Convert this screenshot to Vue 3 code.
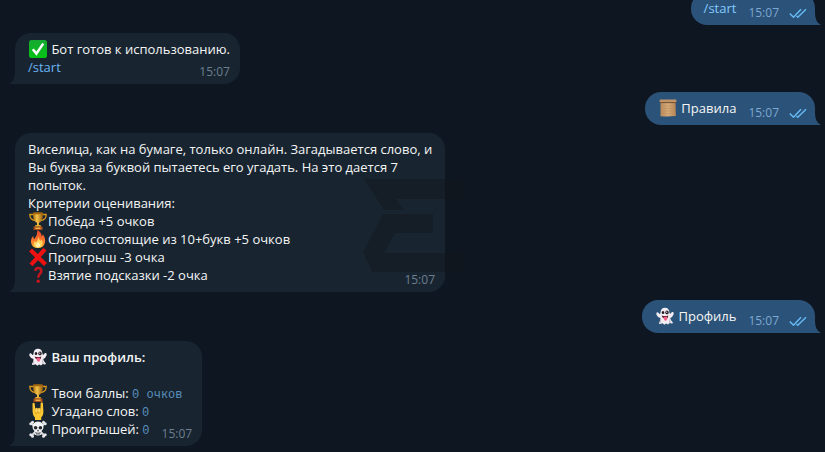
<script setup>
// Chat history, oldest message first
const messages = [
  { id: 1, out: true, time: '15:07', lines: [{ link: '/start' }] },
  {
    id: 2,
    time: '15:07',
    lines: [{ icon: 'check', text: ' Бот готов к использованию.' }, { link: '/start' }],
  },
  { id: 3, out: true, time: '15:07', lines: [{ icon: 'scroll', text: ' Правила' }] },
  {
    id: 4,
    time: '15:07',
    lines: [
      {
        text: 'Виселица, как на бумаге, только онлайн. Загадывается слово, и Вы буква за буквой пытаетесь его угадать. На это дается 7 попыток.',
      },
      { text: 'Критерии оценивания:' },
      { icon: 'trophy', text: 'Победа +5 очков' },
      { icon: 'fire', text: 'Слово состоящие из 10+букв +5 очков' },
      { icon: 'cross', text: 'Проигрыш -3 очка' },
      { icon: 'question', text: 'Взятие подсказки -2 очка' },
    ],
  },
  { id: 5, out: true, time: '15:07', lines: [{ icon: 'ghost', text: ' Профиль' }] },
  {
    id: 6,
    time: '15:07',
    lines: [
      { icon: 'ghost', bold: ' Ваш профиль:' },
      { text: '\u00a0' },
      { icon: 'trophy', text: ' Твои баллы: ', code: '0 очков' },
      { icon: 'horns', text: ' Угадано слов: ', code: '0' },
      { icon: 'skull', text: ' Проигрышей: ', code: '0' },
    ],
  },
]
</script>

<template>
  <svg class="sprite" aria-hidden="true">
    <defs>
      <linearGradient id="gold" x1="0" x2="1" y1="0" y2="0">
        <stop offset="0" stop-color="#a8690c" />
        <stop offset="0.4" stop-color="#f6c64a" />
        <stop offset="1" stop-color="#945808" />
      </linearGradient>
      <linearGradient id="green" x1="0" x2="0" y1="0" y2="1">
        <stop offset="0" stop-color="#16a832" />
        <stop offset="1" stop-color="#04c414" />
      </linearGradient>
      <linearGradient id="flame" x1="0" x2="0" y1="0" y2="1">
        <stop offset="0" stop-color="#e8442a" />
        <stop offset="0.6" stop-color="#fb7a2c" />
        <stop offset="1" stop-color="#ffb62e" />
      </linearGradient>
      <linearGradient id="paper" x1="0" x2="1" y1="0" y2="0">
        <stop offset="0" stop-color="#b98a5c" />
        <stop offset="0.5" stop-color="#d6ab7a" />
        <stop offset="1" stop-color="#b58354" />
      </linearGradient>
    </defs>
    <symbol id="check" viewBox="0 0 18 18">
      <rect width="18" height="18" rx="2.5" fill="url(#green)" />
      <path d="M3.8 9.2 7.4 13.6 14.2 3.6" fill="none" stroke="#fff" stroke-width="2.5" />
    </symbol>
    <symbol id="scroll" viewBox="0 0 18 18">
      <path d="M1.5 2h15l.4 15q-8 .8-15.400.2z" fill="url(#paper)" />
      <rect x="0.600" y="0.600" width="16.800" height="3" rx="1" fill="#c0946a" />
      <path d="M1 3.600h16" stroke="#74502e" stroke-width="1" />
      <path d="M4 7h10M4 9.500h10M4 12h10M4 14.500h9" stroke="#bd9060" stroke-width="0.600" />
    </symbol>
    <symbol id="trophy" viewBox="0 0 18 18">
      <path d="M4.500 2.500H.8q0 5.500 5.400 6M13.500 2.500h3.700q0 5.500-5.400 6" fill="none" stroke="#d9971c" stroke-width="1.300" />
      <path d="M4 .8h10q.2 8.400-4 10v3.200H8v-3.200Q3.800 9.200 4 .8z" fill="url(#gold)" />
      <ellipse cx="9" cy="1.300" rx="5" ry="1" fill="#a3660c" />
      <path d="M6.500 13h5l.7 1.800H5.800z" fill="#e7ab2c" />
      <path d="M4.500 14.500h9V18h-9z" fill="#a94d16" />
      <path d="M6.500 15.600h5v1.300h-5z" fill="#f0ba55" />
    </symbol>
    <symbol id="fire" viewBox="0 0 18 18">
      <path d="M8.500 0q4.500 2.600 4 6.500 1.400-.7 1.300-2.500Q17 8.500 16 12.500 14.600 18 9 18q-6 0-7-5.500Q1.500 8.500 4.300 6q-.2 2.600 1.200 3Q8.600 5 8.500 0z" fill="url(#flame)" />
      <path d="M9.500 7q.3 2.600 2 4 1.100-.4 1.200-1.700 1.600 3.200.5 5.700-1.300 2.700-4.200 2.700-3.600 0-4.200-3.200-.2-2 .9-3.500.5 1.500 1.500 1.300Q9 10.500 9.500 7z" fill="#ffd75c" />
      <path d="M9.300 12q3 3.200 1 5-1.400.9-2.700 0-1.700-1.800 1.700-5z" fill="#fff1b4" />
    </symbol>
    <symbol id="cross" viewBox="0 0 18 18">
      <path d="M1.500 2 16.500 16.500M16 1.200 2 16.800" stroke="#ee1111" stroke-width="4.200" />
    </symbol>
    <symbol id="question" viewBox="0 0 18 18">
      <path d="M6.300 4.800Q6.500 2 9.300 2q3 0 3 2.900 0 1.600-1.500 3.100T9.300 11.800" fill="none" stroke="#c4141c" stroke-width="2.500" />
      <circle cx="9.200" cy="15.200" r="1.600" fill="#d4141c" />
    </symbol>
    <symbol id="ghost" viewBox="0 0 18 18">
      <path d="M9 .8q4.200 0 4.500 5.200.5 1.300 1.500.3.700-1.700 1.900-1.200 1.300.8.500 2.600-1 2.600-3.100 3.200.1 2.500 2.400 4.400.7 1-.8 1.100l-2.300-.3-1.500 1.500-2-1.200-1.800 1.300-1.700-1.500-2.600.7q-1.600-.1-.8-1.300 1.700-2 1.200-4.600Q1.600 10.500.6 8-.2 5.800 1.300 5.200q1.200-.2 1.900 1.500 1 .7 1.200-.7Q4.800.8 9 .8z" fill="#f1edf2" />
      <path d="M13.300 10q.1 4 2 5.700l-2.400-.2zM4.600 10q.2 3.800-1.400 5.900l2-.7z" fill="#c3bfc9" />
      <ellipse cx="7" cy="5.400" rx="1.300" ry="1.500" fill="#241c22" />
      <ellipse cx="11" cy="5.400" rx="1.700" ry="1.900" fill="#241c22" />
      <circle cx="10.800" cy="5.200" r="0.600" fill="#fff" />
      <path d="M5.700 8.500q3.300 1.200 6.600 0-.3 3-2 3.300Q6.400 12 5.700 8.500z" fill="#5c1824" />
      <path d="M7.500 9.700h3.600v2.800q-1.500 2.300-3 .2z" fill="#f0608a" />
    </symbol>
    <symbol id="horns" viewBox="0 0 18 18">
      <path d="M3.500 1.200q1.300-1.100 2.200.2l.5 5.400h5.200l.3-5.800q1.100-1.500 2.200 0l.5 9q.1 4-2.200 5.500V18H6v-2.300Q3.500 13.500 3.600 9.500z" fill="#fcc832" />
      <path d="M6.300 6.700q1.200-1.300 2.500 0 1.300-1.300 2.600 0v3.600q-1.300 1.200-2.600 0-1.300 1-2.500 0z" fill="#ffdc62" stroke="#d89a20" stroke-width="0.500" />
      <path d="M8.800 6.800v3.500M5.600 12q2.700-2.300 5.600-.8" fill="none" stroke="#d08e18" stroke-width="0.600" />
    </symbol>
    <symbol id="skull" viewBox="0 0 18 18">
      <path d="M2.500 3.500 15.500 15.500M15.500 3.500 2.500 15.500" stroke="#d8d8dc" stroke-width="2" />
      <g fill="#e6e6ea">
        <circle cx="1.800" cy="3.800" r="1.500" /><circle cx="3.500" cy="2.200" r="1.500" />
        <circle cx="16.200" cy="3.800" r="1.500" /><circle cx="14.500" cy="2.200" r="1.500" />
        <circle cx="1.800" cy="14.700" r="1.500" /><circle cx="3.500" cy="16.200" r="1.500" />
        <circle cx="16.200" cy="14.700" r="1.500" /><circle cx="14.500" cy="16.200" r="1.500" />
      </g>
      <path d="M9 1.500q5.300.1 5.500 5.500 0 2.800-2 4v3.500q-3.500 2.200-7 0V11q-2-1.200-2-4Q3.700 1.600 9 1.500z" fill="#f3f3f5" />
      <circle cx="6.600" cy="7.700" r="1.800" fill="#26282e" />
      <circle cx="11.400" cy="7.700" r="1.800" fill="#26282e" />
      <path d="m9 9.500 1 1.700H8z" fill="#26282e" />
      <path d="M6 12.700q3 1.200 6 0M7.700 12.600v2.200M9 13v2.200M10.300 12.600v2.200" fill="none" stroke="#4a4c54" stroke-width="0.700" />
    </symbol>
  </svg>

  <main class="chat">
    <article v-for="message in messages" :key="message.id" class="bubble" :class="{ out: message.out }">
      <template v-for="(line, i) in message.lines" :key="i">
        <br v-if="i" />
        <svg v-if="line.icon" class="emoji" aria-hidden="true"><use :href="'#' + line.icon" /></svg>
        <span v-if="line.text">{{ line.text }}</span>
        <b v-if="line.bold">{{ line.bold }}</b>
        <a v-if="line.link" :href="'#' + line.link">{{ line.link }}</a>
        <code v-if="line.code">{{ line.code }}</code>
      </template>
      <span class="meta">
        <time>{{ message.time }}</time>
        <svg v-if="message.out" class="ticks" viewBox="0 0 18 10" role="img" aria-label="Прочитано">
          <path d="M.8 5.500 4.500 9.200 12 1.200M7.500 8 8.800 9.200 17 1.200" />
        </svg>
      </span>
      <svg class="tail" viewBox="0 0 8 12" aria-hidden="true"><path d="M8 0v12H0q6-3 6-12z" /></svg>
    </article>

    <svg class="watermark" viewBox="0 0 100 94" aria-hidden="true">
      <path d="M1 0h99v20H33l8 11H21zM20 35h50v19H32L21 74h79v19H9L0 73z" />
    </svg>
  </main>
</template>

<style>
body {
  margin: 0;
  background: #0e1621;
}
</style>

<style scoped>
.sprite {
  position: absolute;
  width: 0;
  height: 0;
}

.chat {
  position: relative;
  box-sizing: border-box;
  height: 100vh;
  padding: 0 10px 6px 15px;
  display: flex;
  flex-direction: column;
  justify-content: flex-end;
  align-items: flex-start;
  gap: 8px;
  overflow: hidden;
  background: #0e1621;
  color: #f5f5f5;
  font: 13px/18px 'Open Sans', sans-serif;
}

.bubble {
  position: relative;
  box-sizing: border-box;
  flex: none;
  max-width: 430px;
  padding: 7px 10px 8px 13px;
  border-radius: 16px 16px 16px 0;
  background: #182531;
}

.bubble.out {
  align-self: flex-end;
  border-radius: 16px 16px 0 16px;
  background: #2b5278;
}

.bubble span {
  white-space: pre-wrap;
}

.bubble b {
  font-weight: 600;
  white-space: pre-wrap;
}

.bubble a {
  color: #6ab3f3;
  text-decoration: none;
}

.out a {
  color: #83caff;
}

.bubble code {
  color: #5a8fbc;
  font: 12px/12px 'Liberation Mono', monospace;
}

.emoji {
  width: 18px;
  height: 18px;
  margin: 0 1px;
  vertical-align: top;
}

.bubble .meta {
  float: right;
  display: flex;
  align-items: center;
  gap: 10px;
  margin: 5px 0 -5px 12px;
  color: #6d7f8f;
  font-size: 12px;
  white-space: normal;
}

.out .meta {
  margin-right: -2px;
  color: #7da8d3;
}

.ticks {
  width: 18px;
  height: 10px;
  fill: none;
  stroke: #65b9f4;
  stroke-width: 1.5;
}

.tail {
  position: absolute;
  bottom: 0;
  left: -6px;
  width: 8px;
  height: 12px;
  fill: #182531;
}

.out .tail {
  left: auto;
  right: -6px;
  fill: #2b5278;
  transform: scaleX(-1);
}

.watermark {
  position: absolute;
  top: 179px;
  left: 363px;
  width: 100px;
  height: 94px;
  fill: #12171b;
  opacity: 0.45;
}
</style>
